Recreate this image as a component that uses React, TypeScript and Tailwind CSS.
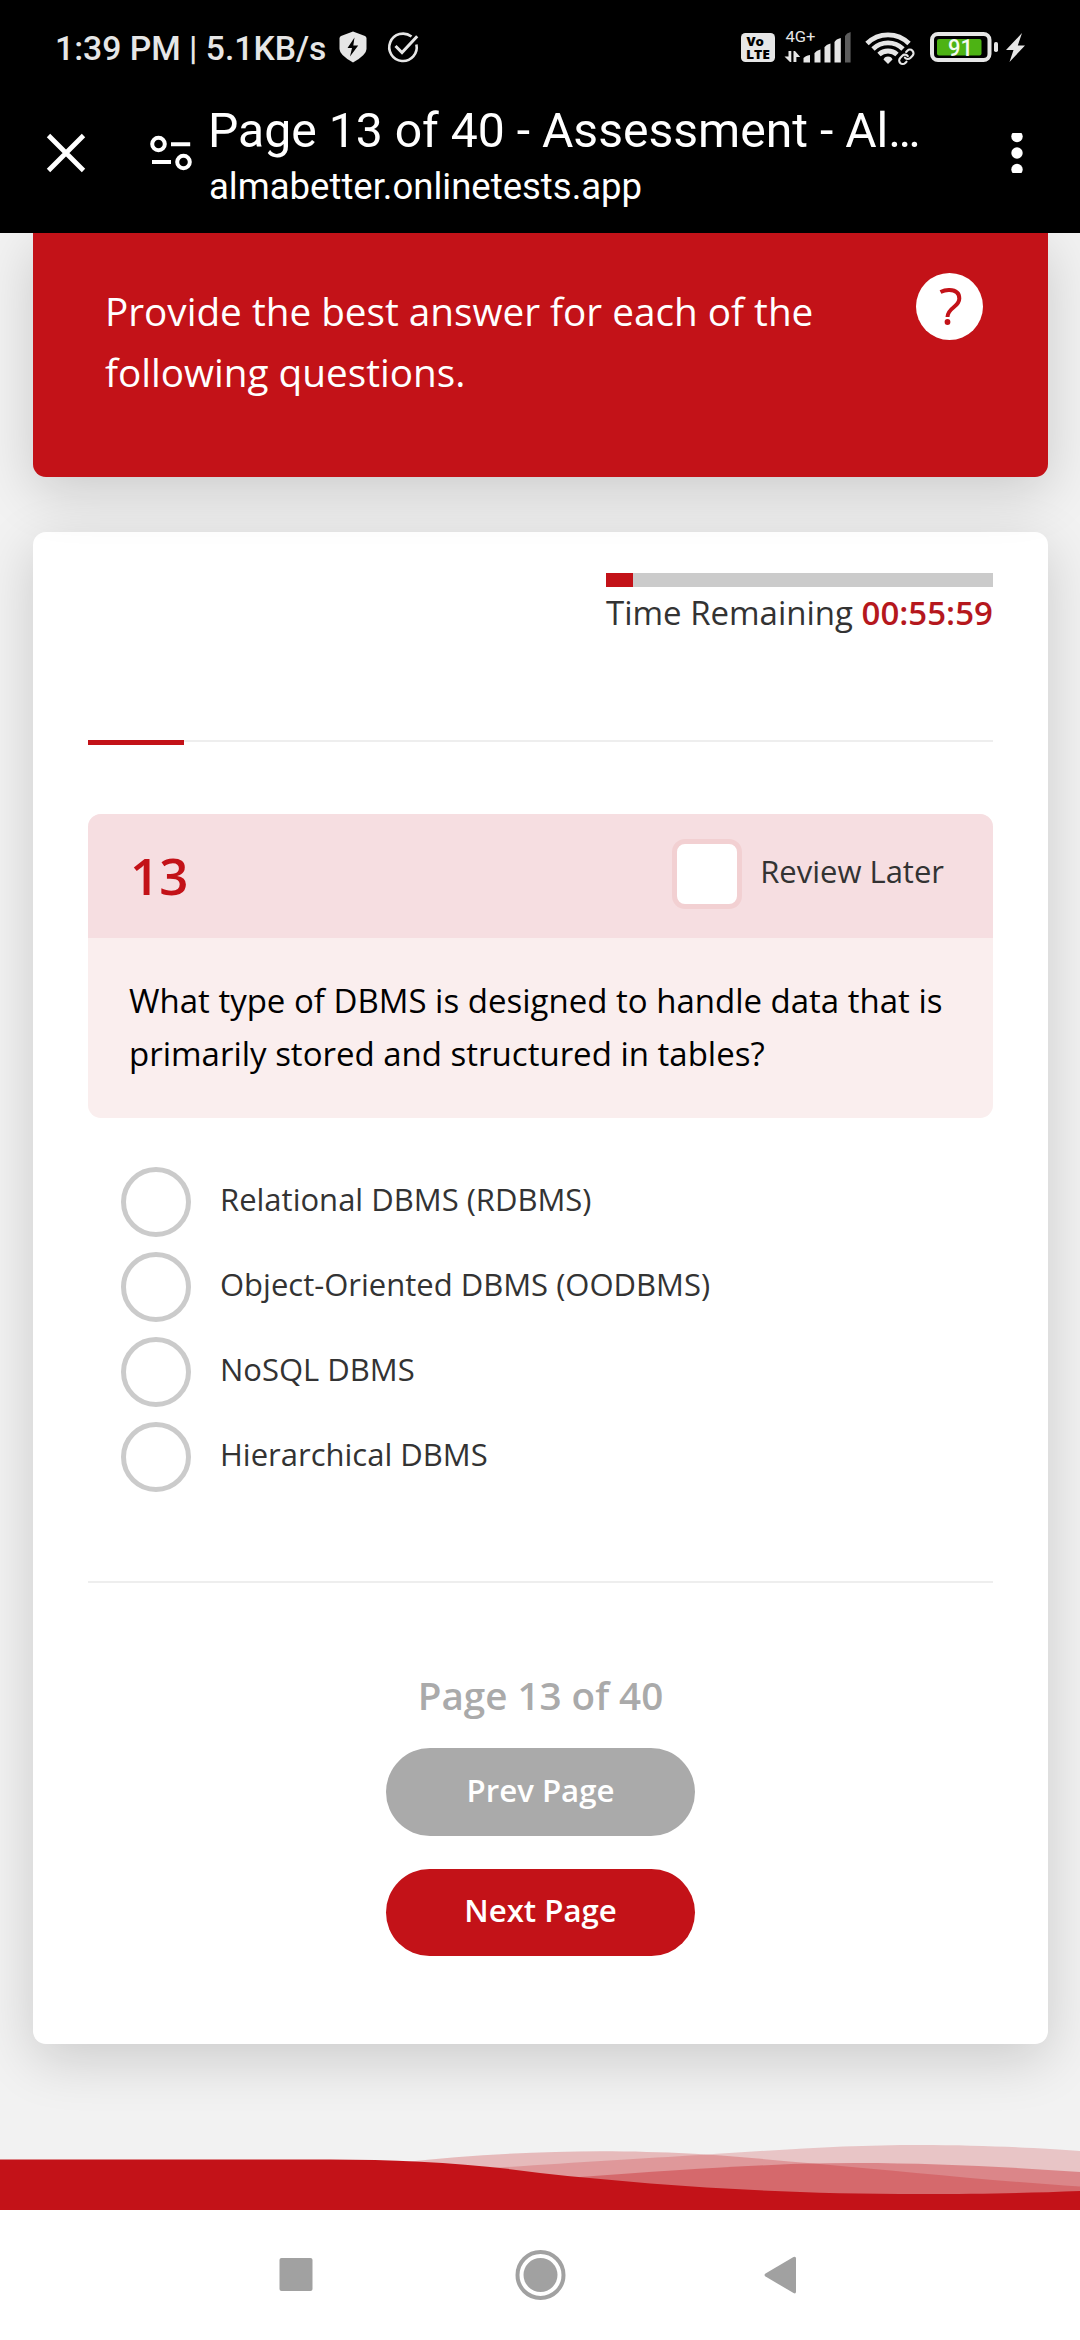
import React from "react";

const options = [
  "Relational DBMS (RDBMS)",
  "Object-Oriented DBMS (OODBMS)",
  "NoSQL DBMS",
  "Hierarchical DBMS",
];

function ShieldIcon() {
  return (
    <svg className="ml-[13px] h-10 w-7" viewBox="338 28 28 40">
      <path
        d="M352 31.5 L364 36 Q365.5 36.6 365.5 38.5 V49 Q365.5 55 352 62.5 Q338.5 55 338.5 49 V38.5 Q338.5 36.6 340 36 Z"
        fill="#e6e6e6"
      />
      <path d="M353.5 37.5 L346.5 48 H351 L349 56.5 L357.2 45.5 H352.3 Z" fill="#000" />
    </svg>
  );
}

function CheckCircleIcon() {
  return (
    <svg className="ml-[19px] h-10 w-[34px]" viewBox="385 28 34 40" fill="none" stroke="#e6e6e6" strokeWidth="2.6">
      <path d="M410.5 36.6 A13.7 13.7 0 1 0 415.4 44.5" />
      <path d="M394.5 46 L401 52.5 L416.2 36.3" strokeWidth="3" />
    </svg>
  );
}

function VolteIcon() {
  return (
    <svg className="h-10 w-[34px]" viewBox="741 28 34 40" fontFamily="Open Sans, sans-serif" fontWeight="800">
      <rect x="741" y="33" width="34" height="29" rx="4.5" fill="#e6e6e6" />
      <text x="746.5" y="46" fontSize="12.5" textLength="17.5" lengthAdjust="spacingAndGlyphs">
        Vo
      </text>
      <text x="746" y="58.5" fontSize="13" textLength="24" lengthAdjust="spacingAndGlyphs">
        LTE
      </text>
    </svg>
  );
}

function SignalIcon() {
  return (
    <svg className="ml-[9px] h-10 w-[68px]" viewBox="784 28 68 40" fill="#e6e6e6">
      <text x="785.5" y="42" fontSize="15.5" fontFamily="Roboto, sans-serif" textLength="30" lengthAdjust="spacingAndGlyphs">
        4G+
      </text>
      <path d="M788.5 51 H791.3 V62 H790 L784.5 56.5 H788.5 Z" />
      <path d="M793.5 62 V51 H795 L800.2 57 H796.4 V62 Z" />
      <path d="M803.5 62.5 V58.5 Q805 55.5 810 55 V62.5 Z" />
      <path d="M814.5 62.5 V53.5 Q816 50.5 820.5 49.5 V62.5 Z" />
      <path d="M824.5 62.5 V47.5 Q826 44.5 830.5 43.5 V62.5 Z" />
      <path d="M834.5 62.5 V42 Q836 39 840.8 38 V62.5 Z" />
      <path d="M845 62.5 V36 Q846.5 33 850.6 32 V62.5 Z" fill="#5c5c5c" />
    </svg>
  );
}

function WifiIcon() {
  return (
    <svg className="ml-[13px] h-10 w-[50px]" viewBox="865 28 50 40" fill="none" stroke="#e6e6e6">
      <path d="M867 43.5 A29.7 29.7 0 0 1 909 43.5" strokeWidth="4.8" />
      <path d="M873 49 A21.5 21.5 0 0 1 903 49" strokeWidth="4.8" />
      <path d="M879 54.5 A13.3 13.3 0 0 1 897 54.5" strokeWidth="4.8" />
      <path d="M888 64 L883.5 59.5 Q884.5 56.5 888 56.5 Q891.5 56.5 892.5 59.5 Z" fill="#e6e6e6" stroke="none" />
      <g transform="translate(897.7 48.2) scale(0.72)" strokeLinecap="round" strokeLinejoin="round">
        <g stroke="#000" strokeWidth="8">
          <path d="M10 13a5 5 0 0 0 7.54.54l3-3a5 5 0 0 0-7.07-7.07l-1.72 1.71" />
          <path d="M14 11a5 5 0 0 0-7.54-.54l-3 3a5 5 0 0 0 7.07 7.07l1.71-1.71" />
        </g>
        <g strokeWidth="3">
          <path d="M10 13a5 5 0 0 0 7.54.54l3-3a5 5 0 0 0-7.07-7.07l-1.72 1.71" />
          <path d="M14 11a5 5 0 0 0-7.54-.54l-3 3a5 5 0 0 0 7.07 7.07l1.71-1.71" />
        </g>
      </g>
    </svg>
  );
}

function BatteryIcon() {
  return (
    <svg className="ml-[14px] h-10 w-[97px]" viewBox="929 28 97 40" fill="#e6e6e6">
      <rect x="932" y="34" width="57.5" height="26" rx="6" fill="none" stroke="#e6e6e6" strokeWidth="4" />
      <rect x="937" y="39" width="44.5" height="16.5" rx="2" fill="#4db314" />
      <rect x="994" y="42" width="4" height="10" rx="1.8" />
      <text x="948" y="56" fontSize="23" fontWeight="500" fontFamily="Roboto, sans-serif" fill="#f4faf0" textLength="25" lengthAdjust="spacingAndGlyphs">
        91
      </text>
      <path d="M1022 33 L1006 50 H1013.5 L1009.5 62 L1025 45.5 H1017.8 Z" />
    </svg>
  );
}

function StatusBar() {
  return (
    <div className="flex h-24 items-center pr-[54px] pl-[55px] text-[#e6e6e6]">
      <span className="pt-[2px] text-[33.7px] leading-10 font-medium whitespace-pre">1:39 PM | 5.1KB/s</span>
      <ShieldIcon />
      <CheckCircleIcon />
      <div className="ml-auto flex">
        <VolteIcon />
        <SignalIcon />
        <WifiIcon />
        <BatteryIcon />
      </div>
    </div>
  );
}

function BrowserBar() {
  return (
    <div className="flex h-[137px] items-start text-white">
      <svg className="mt-[37px] ml-[46px] h-10 w-10" viewBox="46 133 40 40" stroke="#fff" strokeWidth="4.8">
        <path d="M48.5 135.5 L83.5 170.5 M83.5 135.5 L48.5 170.5" />
      </svg>
      <svg className="mt-[37px] ml-16 h-10 w-[42px]" viewBox="150 133 42 40" fill="none" stroke="#fff" strokeWidth="4">
        <circle cx="158.5" cy="144" r="6.3" />
        <path d="M171 144.3 H190.2 M152 162 H171" />
        <circle cx="183.5" cy="162" r="6.3" />
      </svg>
      <div className="mt-[7px] ml-4 flex w-[760px] flex-col gap-[6px]">
        <div className="text-[48.1px] leading-14 whitespace-nowrap">Page 13 of 40 - Assessment - Al…</div>
        <div className="pl-[1px] text-[36.5px] leading-11 whitespace-nowrap">almabetter.onlinetests.app</div>
      </div>
      <svg className="mt-[37px] mr-[53px] ml-auto h-10 w-5" viewBox="1007 133 20 40" fill="#fff">
        <circle cx="1017" cy="136.5" r="5.7" />
        <circle cx="1017" cy="153" r="5.7" />
        <circle cx="1017" cy="169.5" r="5.7" />
      </svg>
    </div>
  );
}

function QuestionCard() {
  return (
    <section className="overflow-hidden rounded-[13px] bg-[#faeeee]">
      <div className="flex h-[124px] items-center bg-[#f6dee1] pr-[49px] pl-[42px]">
        <span className="pb-[2px] text-[51px] leading-none font-semibold text-[#c31218]">13</span>
        <span className="mb-1 ml-auto size-[70px] rounded-[13px] border-[5px] border-[#f2d0d2] bg-white" />
        <span className="ml-[18px] pb-2.5 text-[31px] leading-10 text-[#333]">Review Later</span>
      </div>
      <p className="h-[180px] pt-[36px] pl-[41px] text-[33px] leading-[53px] text-black">
        What type of DBMS is designed to handle data that is
        <br />
        primarily stored and structured in tables?
      </p>
    </section>
  );
}

function Waves() {
  return (
    <svg className="block h-[70px] w-full" viewBox="0 2140 1080 70" fill="#c31218">
      <path
        opacity="0.25"
        d="M400 2210 V2162.5 C470 2155 540 2151.3 600 2151.3 C690 2151.3 750 2158 817 2163.7 C900 2171 1000 2181.5 1080 2186.5 V2210 Z"
      />
      <path
        opacity="0.2"
        d="M485 2210 V2168.500 C560 2163.500 640 2158.500 700 2155 C790 2149 850 2145 920 2145 C980 2145 1040 2148 1080 2151 V2210 Z"
      />
      <path opacity="0.35" d="M580 2210 V2177 C660 2171 740 2166 800 2163.700 C900 2161 990 2166 1080 2172 V2210 Z" />
      <path d="M0 2159.500 H330 C400 2159.700 470 2163 540 2173 C660 2186 780 2194 920 2194 C980 2194 1030 2193 1080 2191 V2210 H0 Z" />
    </svg>
  );
}

function NavigationBar() {
  return (
    <nav className="flex h-[130px] items-center bg-white fill-[#a1a1a1]">
      <svg className="ml-[279px] h-[52px] w-[34px]" viewBox="279 2249.5 34 52">
        <rect x="279.5" y="2258.5" width="33" height="33" rx="2" />
      </svg>
      <svg className="ml-[201px] h-[52px] w-[53px]" viewBox="514 2249.5 53 52">
        <circle cx="540.5" cy="2275.5" r="23" fill="none" stroke="#a1a1a1" strokeWidth="4" />
        <circle cx="540.5" cy="2275.5" r="17" />
      </svg>
      <svg className="ml-[196px] h-[52px] w-9" viewBox="763 2249.5 36 52">
        <path d="M793.5 2257.5 Q796 2256.3 796 2259 V2292 Q796 2294.8 793.5 2293.5 L765.5 2277 Q763.5 2275.5 765.5 2274 Z" />
      </svg>
    </nav>
  );
}

export default function App() {
  return (
    <div className="flex h-[2340px] w-[1080px] flex-col overflow-hidden bg-[#f2f2f2] font-['Open_Sans',sans-serif]">
      <header className="z-20 h-[233px] shrink-0 bg-black font-[Roboto,sans-serif]">
        <StatusBar />
        <BrowserBar />
      </header>

      <main className="flex flex-1 flex-col pr-8 pl-[33px]">
        <section className="z-10 flex h-[244px] items-start justify-between rounded-b-[13px] bg-[#c31218] pr-[65px] pl-[72px] text-white shadow-[0_15px_55px_rgba(0,0,0,0.165)]">
          <p className="pt-12 text-[38.7px] leading-[61px] whitespace-nowrap">
            Provide the best answer for each of the
            <br />
            following questions.
          </p>
          <svg className="mt-10 size-[67px]" viewBox="0 0 67 67">
            <circle cx="33.5" cy="33.5" r="33.5" fill="#fff" />
            <path
              d="M24.5 19 Q29 16.8 33.5 17 C40 17.3 43.3 20.5 43.3 25.5 C43.3 34.5 31.8 34 31.5 44"
              fill="none"
              stroke="#c31218"
              strokeWidth="4"
            />
            <circle cx="31.5" cy="49" r="2.9" fill="#c31218" />
          </svg>
        </section>

        <section className="mt-[55px] flex h-[1512px] flex-col rounded-[13px] bg-white px-[55px] shadow-[0_15px_55px_rgba(0,0,0,0.165)]">
          <div className="flex h-[208px] w-[387px] shrink-0 flex-col self-end pt-[41px]">
            <div className="h-3.5 bg-[#cbcbcb]">
              <div className="h-full w-[27px] bg-[#c31218]" />
            </div>
            <div className="mt-[3px] text-[33px] leading-[45px] whitespace-nowrap text-[#333]">
              Time Remaining <span className="font-semibold text-[#b5171d]">00:55:59</span>
            </div>
          </div>

          <div className="mb-[69px] flex h-[5px] items-start">
            <div className="h-[5px] w-24 bg-[#c31218]" />
            <div className="h-[2px] flex-1 bg-[#eee]" />
          </div>

          <QuestionCard />

          <ul className="mt-[49px] flex flex-col gap-[15px] pl-[33px]">
            {options.map((label) => (
              <li key={label} className="flex h-[70px] items-center">
                <span className="size-[70px] rounded-full border-[5px] border-[#cbcbcb]" />
                <span className="ml-[29px] pb-[7px] text-[31px] leading-10 text-[#333]">{label}</span>
              </li>
            ))}
          </ul>

          <div className="mt-[89px] h-[2px] bg-[#eee]" />

          <div className="mt-[86px] flex flex-col items-center font-semibold">
            <div className="text-[38.6px] leading-[52px] text-[#aaa]">Page 13 of 40</div>
            <button className="mt-[27px] h-[88px] w-[309px] rounded-full bg-[#aaa] pb-[3px] text-[31.2px] text-white">
              Prev Page
            </button>
            <button className="mt-[33px] h-[87px] w-[309px] rounded-full bg-[#c31218] pb-[5px] text-[31.2px] text-white">
              Next Page
            </button>
          </div>
        </section>
      </main>

      <Waves />
      <NavigationBar />
    </div>
  );
}
